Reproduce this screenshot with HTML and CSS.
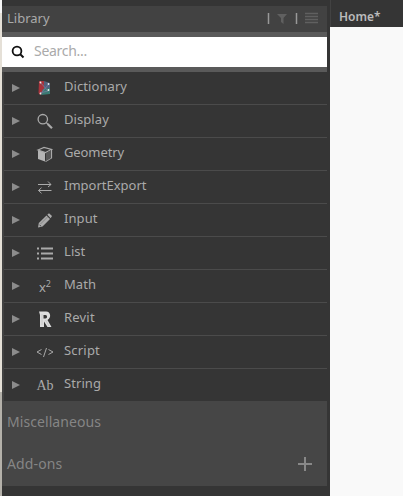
FILE: index.html
```html
<!DOCTYPE html>
<html lang="en">
<head>
<meta charset="utf-8">
<title>Library</title>
<link rel="stylesheet" href="styles.css">
</head>
<body>
<div class="app">
  <div class="edge"></div>
  <aside class="library">
    <header class="head">
      <h1>Library</h1>
      <svg class="tools" width="54" height="14" viewBox="0 0 54 14"><path d="M1.500 1V12M29.500 1V12" stroke="#999" stroke-width="1.500"/><path d="M10 2H20L16.500 6V12L14 10V6Z" fill="#606060"/><path d="M38 1.500H51M38 4.500H51M38 7.500H51M38 10.500H51" stroke="#606060" stroke-width="1.300"/></svg>
    </header>
    <div class="search">
      <svg width="14" height="14" viewBox="0 0 14 14"><circle cx="6" cy="6" r="4.400" fill="none" stroke="#111" stroke-width="1.800"/><path d="M9 9L12.500 12.500" stroke="#111" stroke-width="2"/></svg>
      <span>Search...</span>
    </div>
    <ul class="list">
      <li><i class="arrow"></i><svg class="icon" viewBox="0 0 18 18"><path d="M3 2H8V14L4 16L2.500 14Z" fill="#a8333b"/><path d="M8 2L14 4V10L8 13Z" fill="#50627d"/><path d="M7 10L14 9V15L5 16Z" fill="#397b73"/><path d="M4 3L12 12L4 14M13 5L5 14" fill="none" stroke="#777b9d" stroke-width=".8"/><g fill="#eee"><circle cx="4.500" cy="3.500" r=".9"/><circle cx="12.500" cy="5" r=".9"/><circle cx="12.500" cy="11" r=".9"/><circle cx="4.500" cy="14.500" r=".9"/></g></svg><span>Dictionary</span></li>
      <li><i class="arrow"></i><svg class="icon" viewBox="0 0 18 18"><circle cx="6.800" cy="7.200" r="4.700" fill="none" stroke="#aaa" stroke-width="1.300"/><path d="M10.300 10.600L12 12.300" stroke="#aaa" stroke-width="1.300"/><path d="M11.700 12L16 16.300" stroke="#aaa" stroke-width="2.200"/></svg><span class="display">Display</span></li>
      <li><i class="arrow"></i><svg class="icon" viewBox="0 0 18 18"><path d="M2 5L9 7.500V16.500L2 14Z" fill="#b4b4b4"/><path d="M2 5L8 2.500L15.500 4.500L9.500 7.500ZM15.500 4.500V13L9.500 16.500" fill="none" stroke="#aaa" stroke-width="1.200"/><path d="M10 8L15 5V13L10 16Z" fill="#555"/></svg><span class="geometry">Geometry</span></li>
      <li><i class="arrow"></i><svg class="icon" viewBox="0 0 18 18"><path d="M2 6.500H15M12 3.500L15 6.500L12 9M15.500 12.500H2.500M5.500 9.700L2.500 12.500L5.500 15.300" fill="none" stroke="#aaa"/></svg><span class="import">ImportExport</span></li>
      <li><i class="arrow"></i><svg class="icon" viewBox="0 0 18 18"><path d="M2 16.500L2.800 12L10.500 4.500L14 8L6.500 15.500ZM11.300 3.800L13 2.200L16 5L14.700 7.200Z" fill="#aaa"/><path d="M4.500 13L11.500 6" stroke="#777" stroke-width=".7"/><path d="M3.500 14L5 15" stroke="#353535" stroke-width=".8"/></svg><span class="input">Input</span></li>
      <li><i class="arrow"></i><svg class="icon" viewBox="0 0 18 18"><path d="M1 4.500H3M1 9.500H3M1 14.500H3" stroke="#aaa" stroke-width="2"/><path d="M5 4.500H17M5 9.500H17M5 14.500H17" stroke="#aaa" stroke-width="1.900"/></svg><span class="word-list">List</span></li>
      <li><i class="arrow"></i><b class="glyph math">x<sup>2</sup></b><span class="word-math">Math</span></li>
      <li><i class="arrow"></i><svg class="icon" viewBox="0 0 18 18"><path fill-rule="evenodd" d="M3 1.500H10C15 1.500 15.500 8 11.500 10L15.500 17H11.500L8 11.500V17H4V5ZM7.500 5V8.500H9.500C11.500 8.500 11.500 5 9.500 5Z" fill="#ddd"/><path d="M6 4V15M9.500 10L13 16" fill="none" stroke="#c0c0c0" stroke-width=".7"/></svg><span class="revit">Revit</span></li>
      <li><i class="arrow"></i><svg class="icon" viewBox="0 0 18 18"><path d="M5.500 6.500L1 9L5.500 11.500M10.500 5L7.500 14M12.500 6.500L17 9L12.500 11.500" fill="none" stroke="#aaa"/></svg><span class="script">Script</span></li>
      <li><i class="arrow"></i><b class="glyph string">Ab</b><span class="word-string">String</span></li>
    </ul>
    <footer class="foot">
      <div class="misc">Miscellaneous</div>
      <div class="addons"><span>Add-ons</span><i class="plus"></i></div>
    </footer>
  </aside>
  <main class="workspace"><div class="tab">Home*</div><div class="canvas"></div></main>
</div>
</body>
</html>
```
FILE: styles.css
```css
* { box-sizing: border-box; }
body { margin: 0; background: #353535; color: #aaa; font: 13px/20px "Noto Sans", sans-serif; overflow: hidden; }
.app { display: flex; width: 403px; height: 496px; }
.edge { width: 2px; background: linear-gradient(#f5f5f5 0 13px, #e5e0d7 13px 392px, #b4b1aa 392px); }
.library { width: 325px; padding-top: 6px; }
.head { height: 26px; background: #424242; display: flex; align-items: center; justify-content: space-between; padding: 0 6px 0 5px; }
h1 { margin: 0; padding-bottom: 2px; font-size: 13px; font-weight: 400; }
.search { height: 40px; border: solid #5a5a5a; border-width: 5px 0; background: #fff; display: flex; align-items: center; padding-left: 9px; gap: 9px; color: #aaa; font-size: 14px; }
.search span { padding-bottom: 2px; letter-spacing: -.3px; }
.list { list-style: none; margin: 0; padding: 0; border-left: 2px solid #424242; }
.list li { height: 33px; border-bottom: 1px solid #4b4b4b; display: flex; align-items: center; padding-left: 8px; }
.list li:last-child { border: 0; height: 32px; }
.list span { margin-left: 10px; padding-bottom: 4px; letter-spacing: .07px; }
.list .geometry { letter-spacing: -.1px; }
.list .import { letter-spacing: 0; }
.list .script, .list .revit { letter-spacing: .2px; }
.arrow { border: solid transparent; border-width: 4px 0 4px 8px; border-left-color: #8c8c8c; }
.icon, .glyph { width: 18px; height: 18px; margin-left: 16px; flex: none; }
.glyph { font-weight: 400; line-height: 20px; text-align: center; }
.math { font-size: 13px; line-height: 20px; }
.math sup { font-size: 9px; line-height: 0; }
.string { font: 14px/20px "Liberation Serif", serif; }
.foot { height: 85px; background: #464646; color: #858585; font-size: 14px; padding: 0 15px 0 5px; }
.misc { height: 41px; line-height: 41px; letter-spacing: .07px; }
.addons { height: 44px; display: flex; align-items: center; justify-content: space-between; letter-spacing: .12px; }
.plus { width: 14px; height: 14px; background: linear-gradient(#888 0 0) center / 14px 2px no-repeat, linear-gradient(#888 0 0) center / 2px 14px no-repeat; }
.workspace { margin-left: 3px; width: 73px; display: flex; flex-direction: column; }
.tab { height: 27px; color: #bbb; font-weight: 600; font-size: 12px; line-height: 34px; padding-left: 8px; border-left: 1px solid #424242; }
.canvas { flex: 1; background: #f9f9f9; }
```
